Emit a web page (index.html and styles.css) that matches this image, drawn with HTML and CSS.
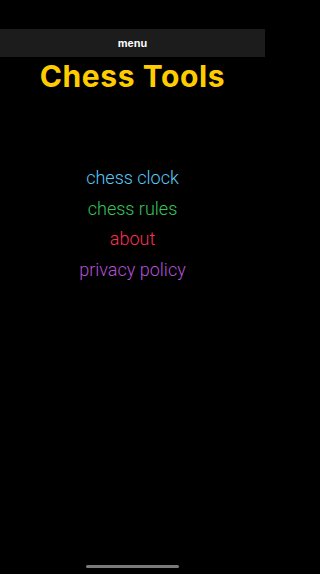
FILE: index.html
```html
<!DOCTYPE html>
<html>
<head>
<meta charset="utf-8">
<link rel="stylesheet" href="styles.css">
</head>
<body>
<div class="screen">
  <div class="status"></div>
  <div class="menubar">menu</div>
  <h1 class="title">Chess Tools</h1>
  <nav class="links">
    <a class="link clock">chess clock</a>
    <a class="link rules">chess rules</a>
    <a class="link about">about</a>
    <a class="link privacy">privacy policy</a>
  </nav>
  <div class="spacer"></div>
  <div class="home-area"><div class="home"></div></div>
</div>
</body>
</html>
```
FILE: styles.css
```css
html, body {
  margin: 0;
  padding: 0;
  background: #000;
}
.screen {
  width: 265px;
  height: 574px;
  display: flex;
  flex-direction: column;
  background: #000;
  font-family: "Liberation Sans", Arial, sans-serif;
}
.status {
  height: 29px;
}
.menubar {
  height: 28px;
  background: #1c1c1c;
  color: #fff;
  font-size: 11px;
  font-weight: bold;
  display: flex;
  align-items: center;
  justify-content: center;
}
.title {
  margin: 3px 0 0;
  height: 32px;
  line-height: 32px;
  text-align: center;
  color: #ffcc00;
  font-family: Inter, "Liberation Sans", sans-serif;
  font-size: 30px;
  letter-spacing: 0.6px;
  font-weight: 700;
}
.links {
  margin-top: 71px;
  display: flex;
  flex-direction: column;
  align-items: center;
}
.link {
  font-family: Roboto, "Liberation Sans", sans-serif;
  font-weight: 300;
  font-size: 18px;
  height: 30.5px;
  line-height: 30.5px;
}
.clock { color: #5ac8fa; }
.rules { color: #34c759; }
.about { color: #ff2d55; }
.privacy { color: #b650d8; }
.spacer { flex: 1; }
.home-area {
  height: 9px;
  display: flex;
  justify-content: center;
}
.home {
  width: 93px;
  height: 3px;
  border-radius: 2px;
  background: #7a7a7a;
}
```
